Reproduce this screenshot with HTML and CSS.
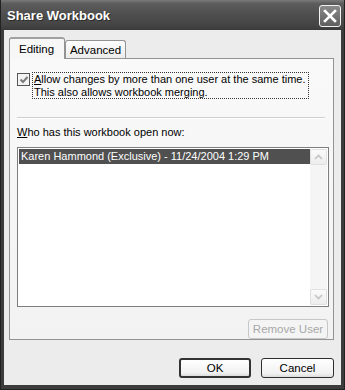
FILE: index.html
```html
<!DOCTYPE html>
<html>
<head>
  <link rel="stylesheet" href="styles.css">
</head>
<body>
  <div class="window">
    <div class="titlebar">
      <span class="title">Share Workbook</span>
      <div class="close-btn">
        <svg width="14" height="14" viewBox="0 0 14 14">
          <path d="M2 2 L12 12 M12 2 L2 12" stroke="#fff" stroke-width="2.6" stroke-linecap="square"/>
        </svg>
      </div>
    </div>

    <div class="client">
      <div class="tabs">
        <div class="tab active">Editing</div>
        <div class="tab">Advanced</div>
      </div>

      <div class="panel">
        <div class="option">
          <div class="checkbox">
            <svg width="10" height="10" viewBox="0 0 10 10">
              <path d="M1.5 4.5 L4 7 L8.5 2" fill="none" stroke="#7c7c7c" stroke-width="2"/>
            </svg>
          </div>
          <div class="option-text"><u>A</u>llow changes by more than one user at the same time.<br>This also allows workbook merging.</div>
        </div>

        <div class="separator"></div>

        <div class="list-label"><u>W</u>ho has this workbook open now:</div>
        <div class="listbox">
          <div class="list-items">
            <div class="list-item selected">Karen Hammond (Exclusive) - 11/24/2004 1:29 PM</div>
          </div>
          <div class="scrollbar">
            <div class="scroll-btn">
              <svg width="9" height="6" viewBox="0 0 9 6"><path d="M1 5 L4.5 1.5 L8 5" fill="none" stroke="#c4c4c4" stroke-width="1.6"/></svg>
            </div>
            <div class="scroll-track"></div>
            <div class="scroll-btn">
              <svg width="9" height="6" viewBox="0 0 9 6"><path d="M1 1 L4.5 4.5 L8 1" fill="none" stroke="#c4c4c4" stroke-width="1.6"/></svg>
            </div>
          </div>
        </div>

        <div class="panel-actions">
          <div class="btn disabled">Remove User</div>
        </div>
      </div>

      <div class="dialog-actions">
        <div class="btn ok">OK</div>
        <div class="btn cancel">Cancel</div>
      </div>
    </div>
  </div>
</body>
</html>
```

FILE: styles.css
```css
body {
  margin: 0;
  font-family: 'Liberation Sans', Arial, sans-serif;
  font-size: 11px;
  color: #000;
  background: #2b2b2b;
}
.window {
  width: 345px;
  height: 390px;
  display: flex;
  flex-direction: column;
  background: #3c3c3c;
  box-sizing: border-box;
  border-left: 1px solid #222;
  border-right: 1px solid #222;
  border-bottom: 1px solid #222;
}
.titlebar {
  height: 30px;
  display: flex;
  align-items: center;
  justify-content: space-between;
  padding: 0 3px 0 6px;
  background: linear-gradient(#7a7a7a 0%, #5c5c5c 12%, #4e4e4e 50%, #444 85%, #3a3a3a 100%);
}
.title {
  color: #fff;
  font-weight: bold;
  font-size: 13px;
  text-shadow: 1px 1px 0 #2a2a2a;
  margin-top: 1px;
}
.close-btn {
  width: 20px;
  height: 20px;
  border: 1px solid #f2f2f2;
  border-radius: 3px;
  background: linear-gradient(#8a8a8a, #5e5e5e);
  display: flex;
  align-items: center;
  justify-content: center;
  margin-top: 1px;
}
.client {
  flex: 1;
  margin: 0 3px 4px 3px;
  background: #ececec;
  padding: 7px 7px 0 5px;
  display: flex;
  flex-direction: column;
}
.tabs {
  display: flex;
  align-items: flex-end;
  height: 21px;
}
.tab {
  height: 18px;
  padding: 0 6px;
  display: flex;
  align-items: center;
  border: 1px solid #939393;
  border-bottom: none;
  border-radius: 3px 3px 0 0;
  background: linear-gradient(#fdfdfd, #ececec);
  box-sizing: border-box;
  font-size: 11.5px;
}
.tab.active {
  height: 22px;
  width: 56px;
  padding: 0 0 0 9px;
  background: #f7f7f7;
  border-top: 2px solid #a0a0a0;
  margin-bottom: -1px;
  position: relative;
  z-index: 1;
}
.tab:not(.active) {
  width: 61px;
  justify-content: center;
}
.panel {
  height: 282px;
  box-sizing: border-box;
  border: 1px solid #939393;
  background: linear-gradient(#f9f9f9, #f2f2f2);
  padding: 13px 4px 0 7px;
  display: flex;
  flex-direction: column;
}
.option {
  display: flex;
  align-items: flex-start;
}
.checkbox {
  width: 11px;
  height: 11px;
  border: 1px solid #555;
  background: #f4f4f4;
  margin-top: 1px;
  display: flex;
  align-items: center;
  justify-content: center;
}
.option-text {
  margin-left: 2px;
  border: 1px dotted #333;
  width: 274px;
  height: 25px;
  padding: 0 0 0 1px;
  line-height: 13px;
  font-size: 11px;
  white-space: nowrap;
}
.separator {
  height: 1px;
  background: #cfcfcf;
  margin: 18px 4px 0 0;
  border-bottom: 1px solid #fff;
}
.list-label {
  margin-top: 7px;
  line-height: 13px;
  font-size: 11px;
}
.listbox {
  margin-top: 8px;
  width: 312px;
  height: 160px;
  box-sizing: border-box;
  border: 1px solid #7e7e7e;
  background: #fff;
  display: flex;
  padding: 1px;
}
.list-items {
  flex: 1;
}
.list-item {
  height: 15px;
  line-height: 15px;
  padding-left: 2px;
  font-size: 11px;
}
.list-item.selected {
  background: #505050;
  color: #fff;
}
.scrollbar {
  width: 17px;
  display: flex;
  flex-direction: column;
  background: #f5f5f5;
}
.scroll-btn {
  height: 16px;
  border: 1px solid #e0e0e0;
  border-radius: 2px;
  box-sizing: border-box;
  background: linear-gradient(#fafafa, #ededed);
  display: flex;
  align-items: center;
  justify-content: center;
}
.scroll-track {
  flex: 1;
}
.panel-actions {
  display: flex;
  justify-content: flex-end;
  margin: 12px 1px 0 0;
}
.btn {
  height: 20px;
  box-sizing: border-box;
  border: 1px solid #2e2e2e;
  border-radius: 3px;
  background: linear-gradient(#ffffff, #f1f1f1 80%, #dcdcdc);
  display: flex;
  align-items: center;
  justify-content: center;
  font-size: 11.5px;
}
.btn.disabled {
  width: 80px;
  border-color: #c6c6c6;
  color: #a8a8a8;
  background: #f4f4f4;
}
.dialog-actions {
  display: flex;
  justify-content: flex-end;
  gap: 10px;
  margin-top: 18px;
}
.btn.ok {
  width: 72px;
  border-width: 2px;
  border-color: #333;
}
.btn.cancel {
  width: 73px;
}
```
